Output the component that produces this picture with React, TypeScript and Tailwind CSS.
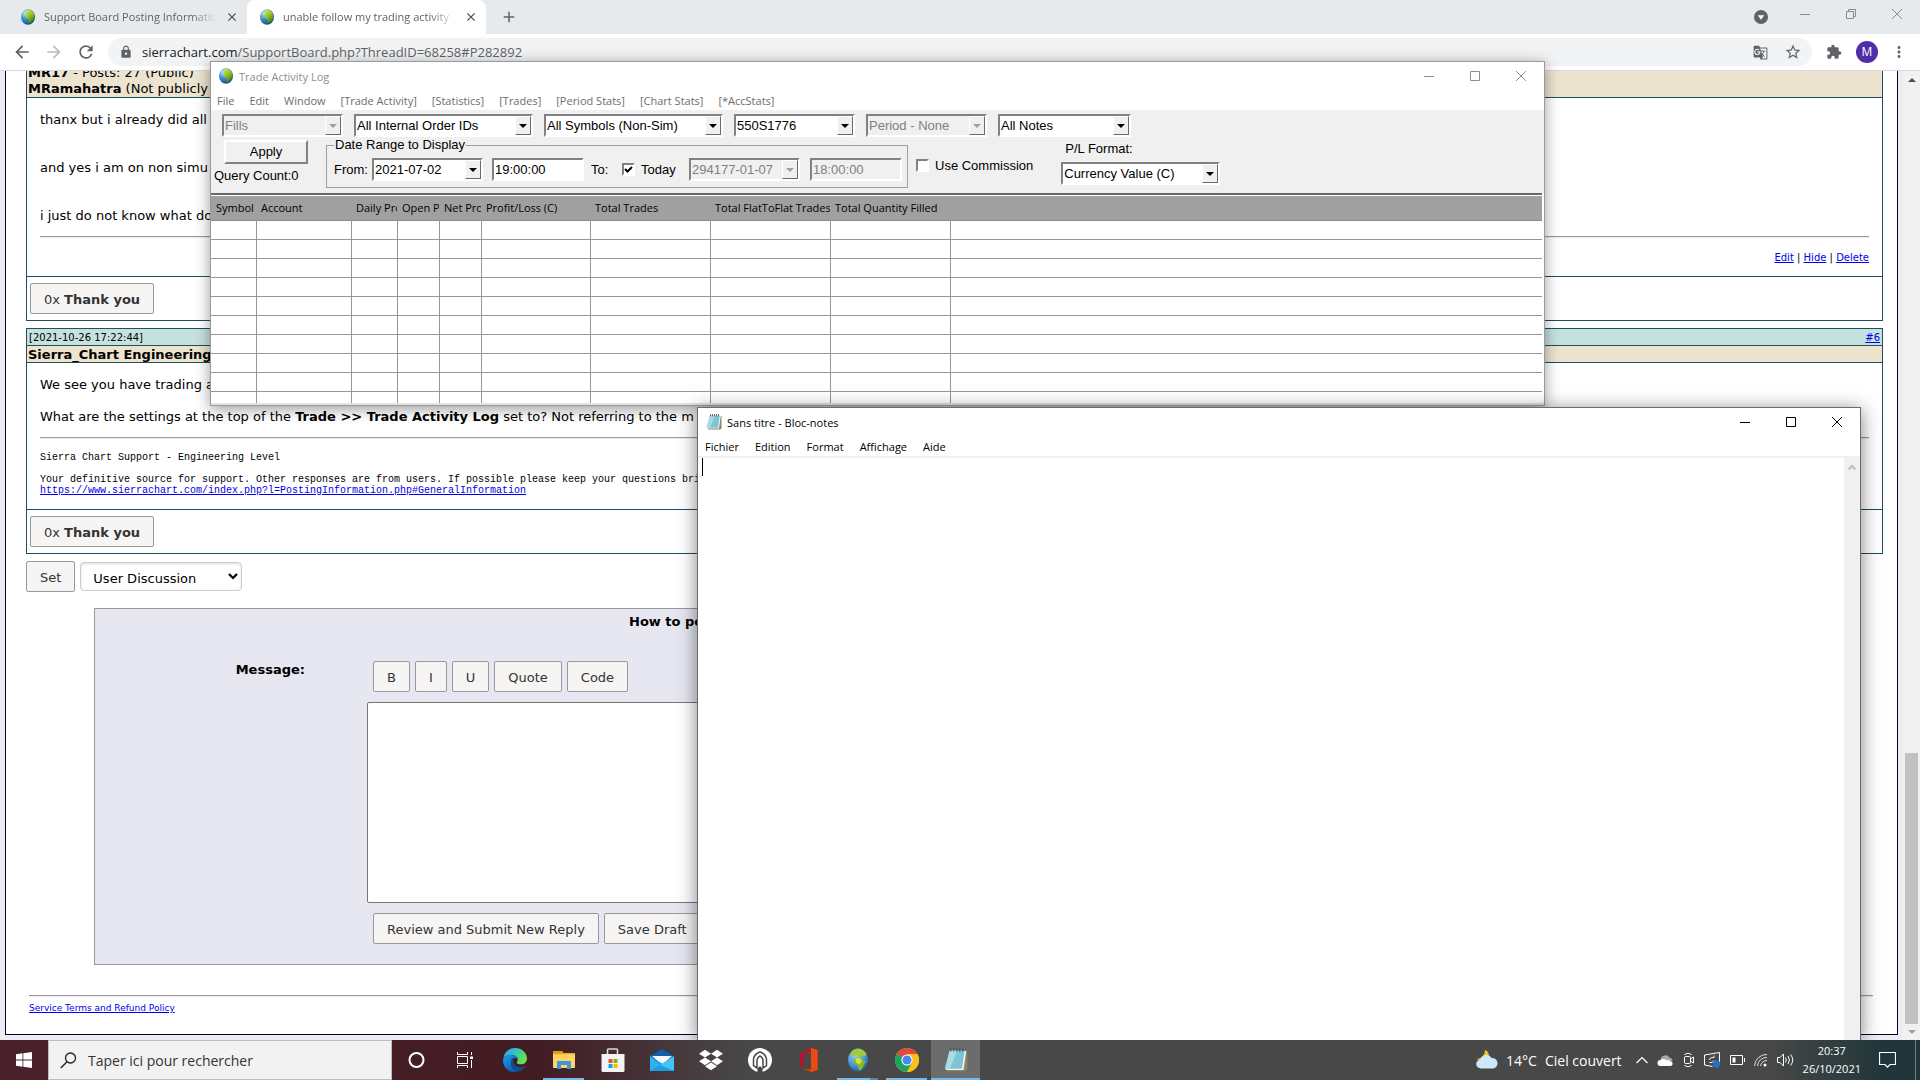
import { useState } from 'react';
import type { ReactNode } from 'react';
import {
  MdArrowBack,
  MdArrowForward,
  MdRefresh,
  MdLock,
  MdStarBorder,
  MdExtension,
  MdMoreVert,
  MdGTranslate,
  MdAdd,
  MdClose,
} from 'react-icons/md';
import { FaDropbox } from 'react-icons/fa';

const tradeMenu = [
  'File',
  'Edit',
  'Window',
  '[Trade Activity]',
  '[Statistics]',
  '[Trades]',
  '[Period Stats]',
  '[Chart Stats]',
  '[*AccStats]',
];

const notepadMenu = ['Fichier', 'Edition', 'Format', 'Affichage', 'Aide'];

const columns = [
  { title: 'Symbol', width: 'w-[45px]' },
  { title: 'Account', width: 'w-[95px]' },
  { title: 'Daily Profit', width: 'w-[46px]' },
  { title: 'Open Profit', width: 'w-[42px]' },
  { title: 'Net Profit', width: 'w-[42px]' },
  { title: 'Profit/Loss (C)', width: 'w-[109px]' },
  { title: 'Total Trades', width: 'w-[120px]' },
  { title: 'Total FlatToFlat Trades', width: 'w-[120px]' },
  { title: 'Total Quantity Filled', width: 'w-[120px]' },
  { title: '', width: '' },
];

function Globe({ className }: { className: string }) {
  return (
    <svg viewBox="0 0 16 16" className={className} aria-hidden="true">
      <defs>
        <radialGradient id="sea" cx="0.3" cy="0.25" r="0.85">
          <stop offset="0" stopColor="#c3e4f7" />
          <stop offset="0.45" stopColor="#3f8fd0" />
          <stop offset="1" stopColor="#123f78" />
        </radialGradient>
        <linearGradient id="land" x1="0" y1="0" x2="0.6" y2="1">
          <stop offset="0" stopColor="#d9ee4a" />
          <stop offset="0.6" stopColor="#86bd24" />
          <stop offset="1" stopColor="#3f7d16" />
        </linearGradient>
      </defs>
      <ellipse cx="8" cy="8" rx="7" ry="7.700" fill="url(#sea)" />
      <path
        d="M6.500 1.200C9 .2 12.400 1.400 13.800 4.600c1.300 3 .5 6-1.500 7.800-.9.900-1.900 1.500-2.900 1.800L8.400 12.600l.3-2-2.300-1.500L5.300 6.600l1-2.200-.4-1.800z"
        fill="url(#land)"
      />
    </svg>
  );
}

function WorldGlobe({ className }: { className: string }) {
  return (
    <svg viewBox="0 0 24 26" className={className} aria-hidden="true">
      <defs>
        <radialGradient id="ocean" cx="0.4" cy="0.3" r="0.8">
          <stop offset="0" stopColor="#a4d4f2" />
          <stop offset="0.55" stopColor="#4a97d3" />
          <stop offset="1" stopColor="#174a86" />
        </radialGradient>
      </defs>
      <ellipse cx="12" cy="13" rx="11" ry="12.500" fill="url(#ocean)" />
      <path d="M4 5.500C6.500 2.500 9 1 12 .8c4 0 7.500 2.200 9.500 6L19 9l-3-1-2 1.500-2.500-2L9 9 6.500 8 4.500 9z" fill="#9fca3c" />
      <path d="M8 11l4-1.200 4 1 2 3 2.500.7-2.500 3-.5 3.500-3 3.500-1.800-1-1-5-3.200-2-1.300-3z" fill="#8cbc22" />
      <path d="M9 11.500l3-1 3 1 1 3-2.500 3-3-1z" fill="#d4e24a" />
    </svg>
  );
}

function NotepadIcon({ className }: { className: string }) {
  return (
    <svg viewBox="0 0 16 16" className={className} aria-hidden="true">
      <path d="M4.500 2h11v12.500l-1.500 1H2z" fill="#8b8468" />
      <path d="M4.500 2h10.300L13 14.600H1.200z" fill="#eef6f8" />
      <path d="M3.800 1.600h10L12 13.800H.6z" fill="#7fc4d3" />
      <path d="M3.800 1.600h5L4 13.800H.6z" fill="#a9dbe5" />
      <path d="M4.500 0v2.400M6.500 0v2.400M8.500 0v2.400M10.500 0v2.400M12.500 0v2.400" stroke="#4e5a5e" strokeWidth="0.8" />
    </svg>
  );
}

function WindowButtons({ className }: { className: string }) {
  return (
    <div className={`flex ${className}`}>
      <button aria-label="Minimize" className="flex h-7 w-[46px] items-center justify-center">
        <svg viewBox="0 0 10 10" className="size-[10px]" stroke="currentColor" fill="none">
          <path d="M0 5.500h10" />
        </svg>
      </button>
      <button aria-label="Maximize" className="flex h-7 w-[46px] items-center justify-center">
        <svg viewBox="0 0 10 10" className="size-[10px]" stroke="currentColor" fill="none">
          <path d="M.5.5h9v9h-9z" />
        </svg>
      </button>
      <button aria-label="Close" className="flex h-7 w-[46px] items-center justify-center">
        <svg viewBox="0 0 10 10" className="size-[10px]" stroke="currentColor" fill="none">
          <path d="M0 0l10 10M10 0L0 10" />
        </svg>
      </button>
    </div>
  );
}

function Combo({
  label,
  value,
  width,
  disabled = false,
}: {
  label: string;
  value: string;
  width: string;
  disabled?: boolean;
}) {
  return (
    <div
      className={`relative h-[23px] border-2 border-t-[#828282] border-l-[#828282] border-r-white border-b-white ${width} ${
        disabled ? 'bg-[#f0f0f0] text-[#808080]' : 'bg-white text-black'
      }`}
    >
      <select
        aria-label={label}
        disabled={disabled}
        defaultValue={value}
        className="block h-full w-full appearance-none bg-transparent pl-px pr-4 opacity-100 outline-none"
      >
        <option>{value}</option>
      </select>
      <span className="pointer-events-none absolute inset-y-0 right-0 flex w-4 items-center justify-center border border-t-white border-l-white border-r-[#696969] border-b-[#696969] bg-[#f0f0f0]">
        <svg viewBox="0 0 8 4" className="h-1 w-2" fill={disabled ? '#a0a0a0' : '#000'}>
          <path d="M0 0h8L4 4z" />
        </svg>
      </span>
    </div>
  );
}

function TimeField({ label, value, disabled = false }: { label: string; value: string; disabled?: boolean }) {
  return (
    <input
      aria-label={label}
      defaultValue={value}
      disabled={disabled}
      className={`h-[23px] w-[92px] border-2 border-t-[#828282] border-l-[#828282] border-r-white border-b-white pl-px outline-none ${
        disabled ? 'bg-[#f0f0f0] text-[#808080]' : 'bg-white'
      }`}
    />
  );
}

function RetroCheck({ children, defaultChecked = false }: { children: ReactNode; defaultChecked?: boolean }) {
  const [checked, setChecked] = useState(defaultChecked);
  return (
    <label className="flex items-center gap-[6px]">
      <span className="relative flex size-[13px]">
        <input
          type="checkbox"
          checked={checked}
          onChange={() => setChecked(!checked)}
          className="size-[13px] appearance-none border-2 border-t-[#828282] border-l-[#828282] border-r-white border-b-white bg-white"
        />
        {checked && (
          <svg viewBox="0 0 13 13" className="pointer-events-none absolute inset-0" fill="none" stroke="#000" strokeWidth="2">
            <path d="M3 6l2.500 2.500L10 4" />
          </svg>
        )}
      </span>
      {children}
    </label>
  );
}

function TradeWindow() {
  return (
    <section className="absolute left-[210px] top-[61px] flex h-[345px] w-[1335px] flex-col border border-[#9a9a9a] bg-white font-['Liberation_Sans'] text-[13px] shadow-[0_3px_14px_rgba(0,0,0,0.4)]">
      <header className="flex h-[30px] items-start text-[#8f8f8f]">
        <Globe className="ml-[7px] mt-[6px] size-4" />
        <h1 className="ml-[5px] mt-[7px] text-[11px] leading-4 font-['Open_Sans']">Trade Activity Log</h1>
        <WindowButtons className="ml-auto" />
      </header>
      <nav className="flex h-[18px] items-center gap-[15px] pl-[6px] text-[11px] leading-4 text-[#6d6d6d] font-['Open_Sans']">
        {tradeMenu.map((item) => (
          <button key={item}>{item}</button>
        ))}
      </nav>
      <div className="bg-[#f0f0f0] pb-[5px]">
        <div className="flex gap-[11px] pl-[11px] pt-1">
          <Combo label="Activity type" value="Fills" width="w-[121px]" disabled />
          <Combo label="Internal order" value="All Internal Order IDs" width="w-[179px]" />
          <Combo label="Symbols" value="All Symbols (Non-Sim)" width="w-[179px]" />
          <Combo label="Account" value="550S1776" width="w-[121px]" />
          <Combo label="Period" value="Period - None" width="w-[121px]" disabled />
          <Combo label="Notes" value="All Notes" width="w-[133px]" />
        </div>
        <div className="flex items-start">
          <div className="w-[115px] pl-[3px]">
            <button className="ml-[10px] mt-[3px] block h-6 w-[84px] border-2 border-t-white border-l-white border-r-[#828282] border-b-[#828282]">
              Apply
            </button>
            <p className="mt-1 leading-4">Query Count:0</p>
          </div>
          <fieldset className="w-[582px] border border-[#a0a0a0] pb-[6px] pl-[7px] pr-1">
            <legend className="px-px leading-4">Date Range to Display</legend>
            <div className="flex items-center pt-[5px]">
              <span className="w-[38px]">From:</span>
              <Combo label="From date" value="2021-07-02" width="w-[111px]" />
              <div className="ml-[9px]">
                <TimeField label="From time" value="19:00:00" />
              </div>
              <span className="ml-[7px] w-[31px]">To:</span>
              <RetroCheck defaultChecked>
                <span className="w-[48px]">Today</span>
              </RetroCheck>
              <Combo label="To date" value="294177-01-07" width="w-[111px]" disabled />
              <div className="ml-[10px]">
                <TimeField label="To time" value="18:00:00" disabled />
              </div>
            </div>
          </fieldset>
          <div className="ml-2 mt-[19px]">
            <RetroCheck>Use Commission</RetroCheck>
          </div>
          <div className="ml-7 mt-1">
            <p className="mb-[5px] pl-1 leading-4">P/L Format:</p>
            <Combo label="P/L Format" value="Currency Value (C)" width="w-[159px]" />
          </div>
        </div>
      </div>
      <div className="mr-[2px] min-h-0 flex-1 overflow-hidden border-t-2 border-[#696969] bg-white pt-px">
        <table className="w-full table-fixed border-collapse text-left text-[11px] font-['Open_Sans']">
          <thead>
            <tr className="h-6 border-b border-[#8a8a8a] bg-[#a0a0a0]">
              {columns.map((col) => (
                <th key={col.title} className={`overflow-hidden pl-[5px] font-normal whitespace-nowrap ${col.width}`}>
                  {col.title}
                </th>
              ))}
            </tr>
          </thead>
          <tbody>
            {Array.from({ length: 10 }, (_, row) => (
              <tr key={row} className="h-[19px]">
                {columns.map((col) => (
                  <td key={col.title} className="border-r border-b border-[#969696] last:border-r-0" />
                ))}
              </tr>
            ))}
          </tbody>
        </table>
      </div>
      <div className="h-[2px] bg-[#e3e3e3]" />
    </section>
  );
}

function NotepadWindow() {
  return (
    <section className="absolute bottom-0 left-[697px] top-[407px] flex w-[1164px] flex-col border border-b-0 border-[#6b6b6b] bg-white font-['Open_Sans'] text-[11px] text-black shadow-[0_3px_18px_rgba(0,0,0,0.5)]">
      <header className="flex h-[30px] items-start">
        <NotepadIcon className="ml-2 mt-[6px] size-4" />
        <h1 className="ml-[5px] mt-[7px] leading-4">Sans titre - Bloc-notes</h1>
        <WindowButtons className="ml-auto" />
      </header>
      <nav className="flex h-5 items-center gap-4 border-b-2 border-[#f0f0f0] pl-[7px] leading-4">
        {notepadMenu.map((item) => (
          <button key={item}>{item}</button>
        ))}
      </nav>
      <div className="flex flex-1">
        <div className="flex flex-1 pl-1">
          <span className="h-[18px] w-px bg-black" />
          <textarea aria-label="Note" className="flex-1 resize-none outline-none" />
        </div>
        <div className="flex w-4 justify-center bg-[#f0f0f0] pt-[6px]">
          <svg viewBox="0 0 8 6" className="h-[6px] w-2" fill="none" stroke="#bdbdbd" strokeWidth="2">
            <path d="M.5 5.500L4 2l3.500 3.500" />
          </svg>
        </div>
      </div>
    </section>
  );
}

function BrowserTab({ title, active = false }: { title: string; active?: boolean }) {
  return (
    <div
      className={`relative flex h-[34px] w-[239px] items-center gap-2 pl-3 pr-2 ${
        active ? 'rounded-t-lg bg-white' : ''
      }`}
    >
      <Globe className="size-4 shrink-0" />
      <span className="flex-1 overflow-hidden whitespace-nowrap mask-r-from-85%">{title}</span>
      <button aria-label="Close tab">
        <MdClose className="size-[14px] text-[#45494d]" />
      </button>
    </div>
  );
}

function BrowserChrome() {
  return (
    <header className="font-['Open_Sans'] text-[#5f6368]">
      <div className="flex h-[34px] items-center bg-[#e7eaed] pl-2 text-[11px]">
        <BrowserTab title="Support Board Posting Information" />
        <BrowserTab title="unable follow my trading activity" active />
        <button aria-label="New tab" className="ml-[14px]">
          <MdAdd className="size-[18px]" />
        </button>
        <svg viewBox="0 0 14 14" className="ml-auto mr-[14px] size-[14px]">
          <circle cx="7" cy="7" r="7" fill="#5f6368" />
          <path d="M3.800 5.200h6.400L7 9.800z" fill="#fff" />
        </svg>
        <div className="flex pb-[6px] text-[#8a8d90]">
          <button aria-label="Minimize" className="flex w-[46px] items-center justify-center">
            <svg viewBox="0 0 10 10" className="size-[10px]" stroke="currentColor" fill="none">
              <path d="M0 5.500h10" />
            </svg>
          </button>
          <button aria-label="Restore" className="flex w-[46px] items-center justify-center">
            <svg viewBox="0 0 10 10" className="size-[10px]" stroke="currentColor" fill="none">
              <path d="M.5 2.500h7v7h-7zM2.500 2.500v-2h7v7h-2" />
            </svg>
          </button>
          <button aria-label="Close" className="flex w-[46px] items-center justify-center">
            <svg viewBox="0 0 10 10" className="size-[10px]" stroke="currentColor" fill="none">
              <path d="M0 0l10 10M10 0L0 10" />
            </svg>
          </button>
        </div>
      </div>
      <div className="flex h-[37px] items-center border-b border-[#d6d8db] bg-white pl-3 pr-3">
        <button aria-label="Back">
          <MdArrowBack className="size-5" />
        </button>
        <button aria-label="Forward" className="ml-3">
          <MdArrowForward className="size-5 text-[#b9bbbe]" />
        </button>
        <button aria-label="Reload" className="ml-3">
          <MdRefresh className="size-5" />
        </button>
        <div className="ml-3 flex h-7 flex-1 items-center rounded-full bg-[#f1f3f4] pl-[11px] pr-[10px] text-[13px]">
          <MdLock className="size-[14px]" />
          <a href="#thread" className="ml-[9px] pt-px">
            <span className="text-[#202124]">sierrachart.com</span>/SupportBoard.php?ThreadID=68258#P282892
          </a>
          <MdGTranslate className="ml-auto size-[15px]" />
          <MdStarBorder className="ml-4 size-[18px]" />
        </div>
        <MdExtension className="ml-[14px] size-4" />
        <span className="ml-[14px] flex size-[22px] items-center justify-center rounded-full bg-[#512da8] text-[12px] text-white">
          M
        </span>
        <MdMoreVert className="ml-3 size-[18px]" />
      </div>
    </header>
  );
}

function PostRule() {
  return <hr className="h-[2px] border-0 border-t border-[#9a9a9a] bg-[#ececec]" />;
}

function FormButton({ children }: { children: ReactNode }) {
  return (
    <button className="h-[31px] rounded-xs border border-[#999] bg-[#f6f5f4] pl-[13px] pr-[13px] pt-[2px] text-[13px] whitespace-nowrap text-[#333]">
      {children}
    </button>
  );
}

function ThankRow() {
  return (
    <div className="border border-t-0 border-[#1f4e5f] px-[3px] py-[6px]">
      <FormButton>
        0x <b>Thank you</b>
      </FormButton>
    </div>
  );
}

function ForumPage() {
  return (
    <div className="flex min-h-0 flex-1 bg-[#ebedee] pl-[5px] font-['DejaVu_Sans'] text-[13px] leading-4 text-black">
      <main className="mb-[5px] mr-[5px] flex-1 border border-t-0 border-[#000040] bg-white pl-5 pr-[14px]">
        <article>
          <div className="flex h-[27px] flex-col justify-end overflow-hidden border border-t-0 border-[#1f4e5f] bg-[#ece4ce] pl-px">
            <p>
              <b>MR17</b> - Posts: 27 (Public)
            </p>
            <p>
              <b>MRamahatra</b> (Not publicly
            </p>
          </div>
          <div className="border border-t-0 border-[#1f4e5f] px-[13px] pb-[11px] pt-[14px]">
            <div className="mb-3 space-y-8">
              <p>thanx but i already did all</p>
              <p>and yes i am on non simu</p>
              <p>i just do not know what do</p>
            </div>
            <PostRule />
            <p className="mt-[13px] text-right text-[10px] leading-[14px]">
              <a href="#edit" className="text-[#0000ee] underline">Edit</a> |{' '}
              <a href="#hide" className="text-[#0000ee] underline">Hide</a> |{' '}
              <a href="#delete" className="text-[#0000ee] underline">Delete</a>
            </p>
          </div>
          <ThankRow />
        </article>

        <article className="mt-[7px]">
          <div className="flex h-[18px] items-center justify-between border border-[#1f4e5f] bg-[#c6e2de] px-[2px] pt-px text-[10px]">
            <span>[2021-10-26 17:22:44]</span>
            <a href="#6" className="text-[#0000ee] underline">#6</a>
          </div>
          <div className="h-[17px] border border-t-0 border-[#1f4e5f] bg-[#ece4ce] pl-px pt-px font-bold">
            Sierra_Chart Engineering
          </div>
          <div className="border border-t-0 border-[#1f4e5f] px-[13px] pb-[13px] pt-[14px]">
            <p>We see you have trading a</p>
            <p className="mb-3 mt-4">
              What are the settings at the top of the <b>Trade &gt;&gt; Trade Activity Log</b> set to? Not referring to the m
            </p>
            <PostRule />
            <div className="mt-[13px] font-['Liberation_Mono'] text-[10px] leading-[11px]">
              <p>Sierra Chart Support - Engineering Level</p>
              <p className="mt-[11px]">
                Your definitive source for support. Other responses are from users. If possible please keep your questions brief
              </p>
              <a href="#general" className="block text-[#0000ee] underline">
                https://www.sierrachart.com/index.php?l=PostingInformation.php#GeneralInformation
              </a>
            </div>
          </div>
          <ThankRow />
        </article>

        <form className="mt-[7px]" onSubmit={(e) => e.preventDefault()}>
          <div className="flex items-center gap-[5px]">
            <FormButton>Set</FormButton>
            <div className="relative">
              <select
                aria-label="Board"
                className="h-[29px] w-[162px] appearance-none rounded border border-[#ccc] bg-white pl-3 pt-1 shadow-[inset_0_1px_3px_#ddd]"
              >
                <option>User Discussion</option>
              </select>
              <svg
                viewBox="0 0 10 7"
                className="pointer-events-none absolute right-1 top-[11px] h-[7px] w-[10px]"
                fill="none"
                stroke="#000"
                strokeWidth="2.200"
              >
                <path d="M1 1l4 4 4-4" />
              </svg>
            </div>
          </div>
          <div className="mx-[68px] mt-4 border border-[#999] bg-[#e7e7f2] pb-5 pt-[5px]">
            <p className="pl-[534px] font-bold">How to post</p>
            <div className="mt-[31px] flex items-start">
              <label htmlFor="message" className="w-[272px] pr-[62px] pt-px text-right font-bold">
                Message:
              </label>
              <div className="flex-1">
                <div className="flex gap-[5px] pl-[6px]">
                  <FormButton>B</FormButton>
                  <FormButton>I</FormButton>
                  <FormButton>U</FormButton>
                  <FormButton>Quote</FormButton>
                  <FormButton>Code</FormButton>
                </div>
                <textarea
                  id="message"
                  className="mt-[10px] block h-[201px] w-[900px] resize-none rounded-xs border border-[#767676] bg-white"
                />
                <div className="mt-[10px] flex gap-[5px] pl-[6px]">
                  <FormButton>Review and Submit New Reply</FormButton>
                  <FormButton>Save Draft</FormButton>
                </div>
              </div>
            </div>
          </div>
        </form>
        <footer className="ml-[3px] mr-[10px] mt-[30px]">
          <PostRule />
          <a href="#terms" className="mt-[5px] block text-[9px] leading-3 text-[#0000ee] underline">
            Service Terms and Refund Policy
          </a>
        </footer>
      </main>
      <div className="flex w-[17px] flex-col items-center bg-[#f1f1f1] py-[6px]">
        <svg viewBox="0 0 8 4" className="mt-[1px] h-1 w-2" fill="#505050">
          <path d="M0 4h8L4 0z" />
        </svg>
        <div className="mt-auto h-[271px] w-[13px] bg-[#c1c1c1]" />
        <svg viewBox="0 0 8 4" className="mt-[6px] h-1 w-2" fill="#a0a0a0">
          <path d="M0 0h8L4 4z" />
        </svg>
      </div>
    </div>
  );
}

function TaskButton({ label, state = '', children }: { label: string; state?: string; children: ReactNode }) {
  return (
    <button
      aria-label={label}
      className={`relative flex h-10 w-[49px] items-center justify-center ${state === 'active' ? 'bg-white/20' : ''}`}
    >
      {children}
      {state === 'open' && <span className="absolute bottom-0 left-1 right-1 h-[2px] bg-[#76b9ed]" />}
      {state === 'active' && <span className="absolute inset-x-0 bottom-0 h-[2px] bg-[#76b9ed]" />}
      {state === 'multi' && (
        <span className="absolute bottom-0 left-1 right-1 h-[2px] border-r-8 border-[#5a86ab] bg-[#76b9ed]" />
      )}
    </button>
  );
}

function TaskbarApps() {
  return (
    <div className="flex">
      <TaskButton label="Cortana">
        <svg viewBox="0 0 18 18" className="size-[18px]" fill="none" stroke="#fff" strokeWidth="2">
          <circle cx="8.500" cy="9" r="7" />
        </svg>
      </TaskButton>
      <TaskButton label="Task view">
        <svg viewBox="0 0 18 16" className="h-4 w-[18px]" fill="none" stroke="#fff">
          <path d="M.5 0v2.500h10V0M.5 16v-2.500h10V16M.5 4.500h10v7H.5zM14.500 0v3M14.500 8v8" />
          <path d="M13 4.500h3v2.500h-3z" fill="#fff" stroke="none" />
        </svg>
      </TaskButton>
      <TaskButton label="Edge">
        <svg viewBox="0 0 24 24" className="size-6">
          <defs>
            <linearGradient id="edgeTop" x1="0" y1="0" x2="1" y2="0.4">
              <stop offset="0" stopColor="#2aa6e8" />
              <stop offset="0.5" stopColor="#2fc3c8" />
              <stop offset="1" stopColor="#67e04a" />
            </linearGradient>
            <linearGradient id="edgeSide" x1="0" y1="0" x2="0.6" y2="1">
              <stop offset="0" stopColor="#1f9fe0" />
              <stop offset="1" stopColor="#0a5cc0" />
            </linearGradient>
          </defs>
          <path d="M.4 10C1.300 4.200 6.200 0 12 0c7 0 12 5 12 10.500 0 3.500-2.600 5.800-6 5.800-2.900 0-4.300-1-4.300-1.900 0-.6 1.100-1.200 1.100-2.900 0-2.400-2.600-4.600-6.300-4.600-4 0-7 1.500-8.100 3.100z" fill="url(#edgeTop)" />
          <path d="M.2 11C1.500 7.800 5 6.400 8.500 6.900c3 .4 5.200 2 6 3.600-1-.6-2.300-.8-3.500-.4-3 1-4 5-2 9 1.100 2.300 3 4 5 4.700C6.500 25.200-1.200 19.500.2 11z" fill="url(#edgeSide)" />
          <path d="M9 10.800c-2.400 4-.4 10.700 5 13 3.600-.5 6.700-2.500 8.500-5.300.3-.5-.2-.8-.6-.6-5 2.400-10.800.3-11.600-4-.2-1.200 0-2 .5-2.800-.6-.6-1.300-.7-1.800-.3z" fill="#0e4f92" />
        </svg>
      </TaskButton>
      <TaskButton label="Explorer" state="open">
        <svg viewBox="0 0 22 18" className="h-[18px] w-[22px]">
          <path d="M0 0h9l1.500 2H22v15H0z" fill="#f0b32c" />
          <path d="M0 0h9l1 2.500H0z" fill="#dd9a0c" />
          <path d="M0 3.500h22V17H0z" fill="#ffd265" />
          <path d="M4 18v-6.500c0-1 .6-1.500 1.500-1.500h11c.9 0 1.500.5 1.500 1.500V18h-4v-4H8v4z" fill="#3a96dd" />
        </svg>
      </TaskButton>
      <TaskButton label="Store">
        <svg viewBox="0 0 24 24" className="size-6">
          <path d="M6.500 6V2q0-1 1-1h8q1 0 1 1v4" fill="none" stroke="#d9dbdd" strokeWidth="1.600" />
          <path d="M.5 6h23v16.500q0 1.500-1.500 1.500H2q-1.500 0-1.500-1.500z" fill="#f1f3f4" />
          <path d="M7.500 11h4v4h-4z" fill="#f25022" />
          <path d="M12.500 11h4v4h-4z" fill="#7fba00" />
          <path d="M7.500 16h4v4h-4z" fill="#00a4ef" />
          <path d="M12.500 16h4v4h-4z" fill="#ffb900" />
        </svg>
      </TaskButton>
      <TaskButton label="Mail">
        <svg viewBox="0 0 24 22" className="h-[22px] w-6">
          <path d="M0 7l12-7 12 7v4H0z" fill="#0f5fae" />
          <path d="M2 7h20l-10 9z" fill="#f5f7f9" />
          <path d="M0 7l24 15H0z" fill="#1f9be4" />
          <path d="M24 7L10 16l14 6z" fill="#41c3f5" />
          <path d="M0 7l10 9L0 22z" fill="#2fb1f0" />
        </svg>
      </TaskButton>
      <TaskButton label="Dropbox">
        <FaDropbox className="size-6 text-white" />
      </TaskButton>
      <TaskButton label="Navigator">
        <svg viewBox="0 0 24 24" className="size-6" fill="none">
          <circle cx="12" cy="12" r="12" fill="#fff" />
          <path d="M5.500 17.500v-6Q6 6 12 4q6 2 6.500 7.500v6L15 20v-8q-.5-3-3-4-2.500 1-3 4v8z" stroke="#474747" strokeWidth="1.500" />
          <path d="M9.500 20.500l2.500-2.500 2.500 2.500V24h-5z" fill="#474747" />
        </svg>
      </TaskButton>
      <TaskButton label="Office">
        <svg viewBox="0 0 20 24" className="h-6 w-5">
          <path d="M1 5.500L12 0l6.500 2v20L12 24 3 20.500l9 .5V4L5 6v11l-4 2z" fill="#d83b01" />
          <path d="M1 5.500L12 0v4L5 6v11l-4 2z" fill="#b3132f" />
          <path d="M12 0l6.500 2v20L12 24z" fill="#eb4a12" />
        </svg>
      </TaskButton>
      <TaskButton label="Sierra Chart" state="multi">
        <WorldGlobe className="h-6 w-[22px]" />
      </TaskButton>
      <TaskButton label="Chrome" state="open">
        <svg viewBox="0 0 24 24" className="size-6">
          <circle cx="12" cy="12" r="12" fill="#fbc116" />
          <path d="M12 12L1.600 6A12 12 0 0 1 22.400 6H12z" fill="#dd4b3e" />
          <path d="M12 12L1.600 6A12 12 0 0 0 12 24l5.200-9z" fill="#1da362" />
          <path d="M12 6.500h10.700a12 12 0 0 1-10.700 17.500l5-9z" fill="#fbc116" />
          <circle cx="12" cy="12" r="5.600" fill="#fff" />
          <circle cx="12" cy="12" r="4.500" fill="#4688f1" />
        </svg>
      </TaskButton>
      <TaskButton label="Bloc-notes" state="active">
        <NotepadIcon className="size-6" />
      </TaskButton>
    </div>
  );
}

function Tray() {
  return (
    <div className="ml-auto flex h-10 items-center text-white font-['Open_Sans']">
      <svg viewBox="0 0 22 20" className="h-5 w-[22px]">
        <path d="M9 0c3 1 4.500 4 3.500 7-1 2.500-4 4-7 3.500L0 9c4 0 9-3 9-9z" fill="#f7c515" />
        <path d="M5 18.500a4.500 4.500 0 0 1-.5-9 6 6 0 0 1 11-1.500 5.300 5.300 0 0 1 1.500 10.500z" fill="#cfe7fa" />
      </svg>
      <span className="ml-2 text-[14px]">14°C</span>
      <span className="ml-2 text-[14px]">Ciel couvert</span>
      <div className="ml-[14px] flex items-center gap-[9px]">
        <svg viewBox="0 0 12 8" className="h-2 w-3" fill="none" stroke="#fff" strokeWidth="1.200">
          <path d="M.5 7L6 1.500 11.500 7" />
        </svg>
        <svg viewBox="0 0 17 12" className="h-3 w-[17px]">
          <path d="M3.500 7a5 5 0 0 1 9-3.500 4 4 0 0 1 3 4z" fill="#a9a9a9" />
          <path d="M3.500 12a3 3 0 0 1 0-6Q7 4 9.500 6.500 12 5 13.500 7.500a2.300 2.300 0 0 1 .5 4.500z" fill="#fff" />
        </svg>
        <svg viewBox="0 0 12 16" className="h-4 w-3" fill="none" stroke="#fff">
          <rect x="1.500" y="4.500" width="6" height="7" rx="1" />
          <path d="M7.500 7l3-2v6l-3-2M1.500 2.500Q5 0 8.500 2.500M1.500 13.500Q5 16 8.500 13.500" />
        </svg>
        <svg viewBox="0 0 17 16" className="h-4 w-[17px]" fill="none" stroke="#fff">
          <path d="M.5 3L15.500.5v10M.5 3v10l8 1.500M5 8q1-3 5-2.500V3.500M5.500 10.500q3 1 4.500-2" />
          <circle cx="12.500" cy="12" r="3.700" fill="#2572c4" stroke="none" />
        </svg>
        <svg viewBox="0 0 15 10" className="h-[10px] w-[15px]" fill="none" stroke="#fff">
          <path d="M.5.5h12v9H.5zM14.500 3v4" />
          <path d="M2.500 2.500h3v5h-3z" fill="#fff" stroke="none" />
        </svg>
        <svg viewBox="0 0 14 14" className="size-[14px]" fill="none" stroke="#e0e0e0">
          <path d="M.5 13A12 12 0 0 1 13 1.500M3.500 13A9 9 0 0 1 13 4.500M6.500 13A6.500 6.500 0 0 1 13 7.500" />
          <circle cx="11" cy="12" r="1.500" fill="#fff" stroke="none" />
        </svg>
        <svg viewBox="0 0 17 14" className="h-[14px] w-[17px]" fill="none" stroke="#fff">
          <path d="M.5 4.500h2.500L6.500 1v12L3 9.500H.5zM8.500 4.500q1.500 2.500 0 5M11 3q3 4 0 8M13.500 1.500q4.500 5.500 0 11" />
        </svg>
      </div>
      <div className="ml-[9px] text-center text-[11px] leading-[18px]">
        <p>20:37</p>
        <p>26/10/2021</p>
      </div>
      <svg viewBox="0 0 17 16" className="ml-[18px] mr-[19px] h-4 w-[17px]" fill="none" stroke="#fff" strokeWidth="1.200">
        <path d="M.5.5h16v12H11l-2.500 2.700L6 12.500H.5z" />
      </svg>
      <span className="mr-1 h-full w-px bg-[#6f8083]" />
    </div>
  );
}

function Taskbar() {
  return (
    <footer className="flex h-10 shrink-0 items-center bg-linear-to-r from-[#484848] from-92% to-[#21363a] to-98%">
      <div className="flex h-full w-full bg-linear-to-r from-[#48212b] from-0% via-[#421b23] via-28% to-transparent to-39%">
        <button aria-label="Démarrer" className="flex w-12 items-center justify-center">
          <svg viewBox="0 0 16 16" className="size-4" fill="#fff">
            <path d="M0 2.200L6.500 1.300v6.200H0zM7.300 1.200L16 0v7.500H7.300zM0 8.400h6.500v6.300L0 13.800zM7.300 8.400H16V16l-8.700-1.200z" />
          </svg>
        </button>
        <label className="flex w-[344px] items-center border border-[#bcbcbc] bg-[#f2f2f2] pl-[11px]">
          <svg viewBox="0 0 17 17" className="size-[17px]" fill="none" stroke="#222" strokeWidth="1.300">
            <circle cx="10.500" cy="6" r="5" />
            <path d="M7 9.800L.8 16" />
          </svg>
          <input
            placeholder="Taper ici pour rechercher"
            aria-label="Rechercher"
            className="ml-[11px] w-60 bg-transparent text-[14px] outline-none font-['Open_Sans'] placeholder:text-[#333]"
          />
        </label>
        <TaskbarApps />
        <Tray />
      </div>
    </footer>
  );
}

export default function App() {
  return (
    <div className="flex h-screen flex-col overflow-hidden">
      <div className="relative flex min-h-0 flex-1 flex-col overflow-hidden">
        <BrowserChrome />
        <ForumPage />
        <TradeWindow />
        <NotepadWindow />
      </div>
      <Taskbar />
    </div>
  );
}
